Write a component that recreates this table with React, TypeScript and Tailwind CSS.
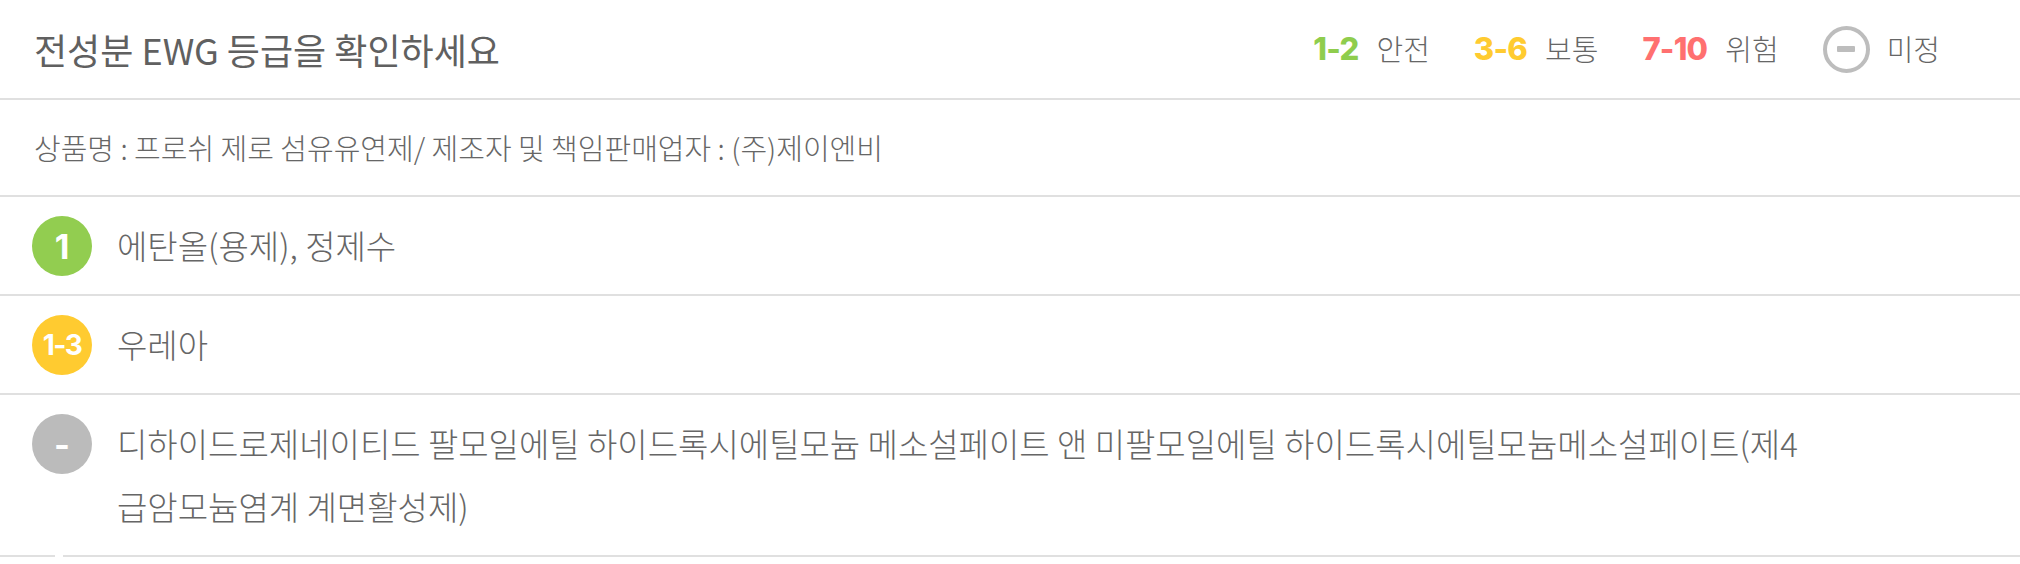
import React from 'react'

const kr = "font-['Noto_Sans_CJK_KR','Noto_Sans',sans-serif]"
const num = "font-['Inter','Lato',sans-serif]"

type Item = { grade: string; color: string; name: string; small?: boolean }

const items: Item[] = [
  { grade: '1', color: 'bg-[#92cd50]', name: '에탄올(용제), 정제수' },
  { grade: '1-3', color: 'bg-[#ffcb30]', name: '우레아', small: true },
  {
    grade: '-',
    color: 'bg-[#bbbbbb]',
    name: '디하이드로제네이티드 팔모일에틸 하이드록시에틸모늄 메소설페이트 앤 미팔모일에틸 하이드록시에틸모늄메소설페이트(제4급암모늄염계 계면활성제)',
  },
]

function Legend() {
  const groups = [
    { range: '1-2', color: 'text-[#8fcd4d]', label: '안전' },
    { range: '3-6', color: 'text-[#ffcb30]', label: '보통' },
    { range: '7-10', color: 'text-[#ff7070]', label: '위험' },
  ]
  return (
    <div className="flex items-center gap-[44px]">
      {groups.map((g) => (
        <div key={g.range} className="flex items-center gap-[18px]">
          <span className={`${num} ${g.color} text-[31px] font-extrabold tracking-tight`}>{g.range}</span>
          <span className={`${kr} text-[29px] font-light text-[#666]`}>{g.label}</span>
        </div>
      ))}
      <div className="flex items-center gap-[17px]">
        <span className="w-[47px] h-[47px] rounded-full border-[4px] border-[#bdbdbd] flex items-center justify-center">
          <span className="w-[18px] h-[6px] rounded-[1px] bg-[#bdbdbd]" />
        </span>
        <span className={`${kr} text-[29px] font-light text-[#666]`}>미정</span>
      </div>
    </div>
  )
}

export default function App() {
  return (
    <div className="w-[2020px] bg-white">
      {/* Header */}
      <div className="h-[100px] flex items-center justify-between pl-[34px] pr-[80px] border-b-2 border-[#e0e0e0]">
        <h2 className={`${kr} text-[36px] font-normal text-[#606060]`}>전성분 EWG 등급을 확인하세요</h2>
        <Legend />
      </div>

      {/* Product */}
      <div className="h-[97px] flex items-center pl-[34px] border-b-2 border-[#e0e0e0]">
        <p className={`${kr} text-[29px] font-light text-[#666]`}>
          상품명 : 프로쉬 제로 섬유유연제/ 제조자 및 책임판매업자 : (주)제이엔비
        </p>
      </div>

      {/* Ingredients */}
      {items.map((it, i) => (
        <div
          key={i}
          className="relative flex items-start gap-[25px] pl-[32px] pr-[210px] py-[17px] border-b-2 border-[#e0e0e0]"
        >
          <div
            className={`${it.color} mt-[2px] w-[60px] h-[60px] shrink-0 rounded-full flex items-center justify-center text-white font-bold ${num} ${
              it.small ? 'text-[28px] tracking-[-1.5px]' : 'text-[34px]'
            }`}
          >
            {it.grade}
          </div>
          <p className={`${kr} flex-1 text-[33px] font-light leading-[63px] text-[#666]`}>{it.name}</p>
          {i === items.length - 1 && (
            <span className="absolute left-[55px] bottom-[-2px] w-[8px] h-[3px] bg-white" />
          )}
        </div>
      ))}
    </div>
  )
}
